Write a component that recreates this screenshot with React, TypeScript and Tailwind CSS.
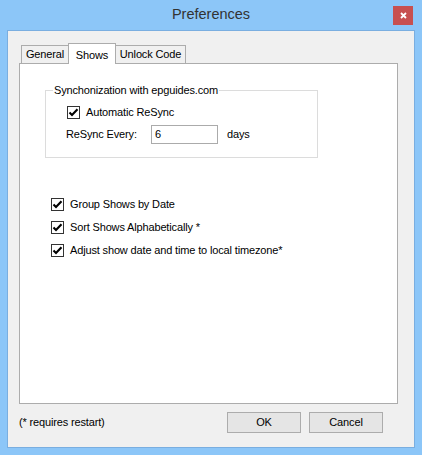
import React from 'react';

const FONT = "font-['Liberation_Sans',Arial,sans-serif]";

const Check: React.FC<{ label: string; className?: string }> = ({ label, className = '' }) => (
  <div className={`flex items-center h-[13px] ${className}`}>
    <div className="w-[13px] h-[13px] border border-[#333] bg-white flex items-center justify-center shrink-0">
      <svg width="11" height="11" viewBox="0 0 11 11">
        <path d="M1.5 5.5 L4 8 L9.5 2.2" fill="none" stroke="#000" strokeWidth="2.1" />
      </svg>
    </div>
    <span className="ml-[6px] leading-none">{label}</span>
  </div>
);

export default function App() {
  return (
    <div className={`w-[422px] h-[455px] bg-[#8cc6f8] flex flex-col text-[11px] text-black tracking-[-0.15px] ${FONT}`}>
      {/* title bar */}
      <div className="relative h-[30px] shrink-0 flex items-center justify-center">
        <span className="text-[14.5px] text-[#333] tracking-normal">Preferences</span>
        <div className="absolute right-[9px] top-[6px] w-[20px] h-[19px] bg-[#c75050] flex items-center justify-center">
          <svg width="7" height="7" viewBox="0 0 7 7">
            <path d="M1 1 L6 6 M6 1 L1 6" stroke="#fff" strokeWidth="1.8" />
          </svg>
        </div>
      </div>

      {/* client area */}
      <div className="mx-[7px] mb-[7px] flex-1 border border-[#7aaee0] bg-[#f0f0f0] flex flex-col">
        {/* tab strip */}
        <div className="flex items-end h-[32px] pl-[13px]">
          <div className="w-[48px] h-[18px] border border-b-0 border-[#acacac] bg-[#f0f0f0] flex items-center justify-center">
            General
          </div>
          <div className="w-[48px] h-[21px] -ml-px -mb-px relative z-10 border border-b-0 border-[#acacac] bg-white flex items-start justify-center pt-[3px]">
            Shows
          </div>
          <div className="w-[71px] h-[18px] -ml-px border border-b-0 border-[#acacac] bg-[#f0f0f0] flex items-center justify-center">
            Unlock Code
          </div>
        </div>

        {/* tab panel */}
        <div className="ml-[11px] w-[379px] h-[341px] border border-[#acacac] bg-white flex flex-col">
          {/* group box */}
          <div className="ml-[25px] mt-[26px] w-[273px] h-[68px] border border-[#dcdcdc] relative">
            <span className="absolute left-[7px] -top-[7px] bg-white px-[1px] leading-[13px]">
              Synchonization with epguides.com
            </span>
            <Check label="Automatic ReSync" className="ml-[21px] mt-[15px]" />
            <div className="flex items-center ml-[20px] mt-[6px]">
              <span className="w-[85px]">ReSync Every:</span>
              <div className="w-[67px] h-[19px] border border-[#ababab] bg-white flex items-center pl-[3px]">6</div>
              <span className="ml-[9px]">days</span>
            </div>
          </div>

          <div className="ml-[31px] mt-[40px] flex flex-col gap-[10px]">
            <Check label="Group Shows by Date" />
            <Check label="Sort Shows Alphabetically *" />
            <Check label="Adjust show date and time to local timezone*" />
          </div>
        </div>

        {/* footer */}
        <div className="flex items-center mt-[8px] pl-[11px] pr-[31px]">
          <span className="flex-1">(* requires restart)</span>
          <button className="w-[74px] h-[21px] border border-[#acacac] bg-[#e5e5e5] text-[11px]">OK</button>
          <button className="ml-[8px] w-[74px] h-[21px] border border-[#acacac] bg-[#e5e5e5] text-[11px]">Cancel</button>
        </div>
      </div>
    </div>
  );
}
